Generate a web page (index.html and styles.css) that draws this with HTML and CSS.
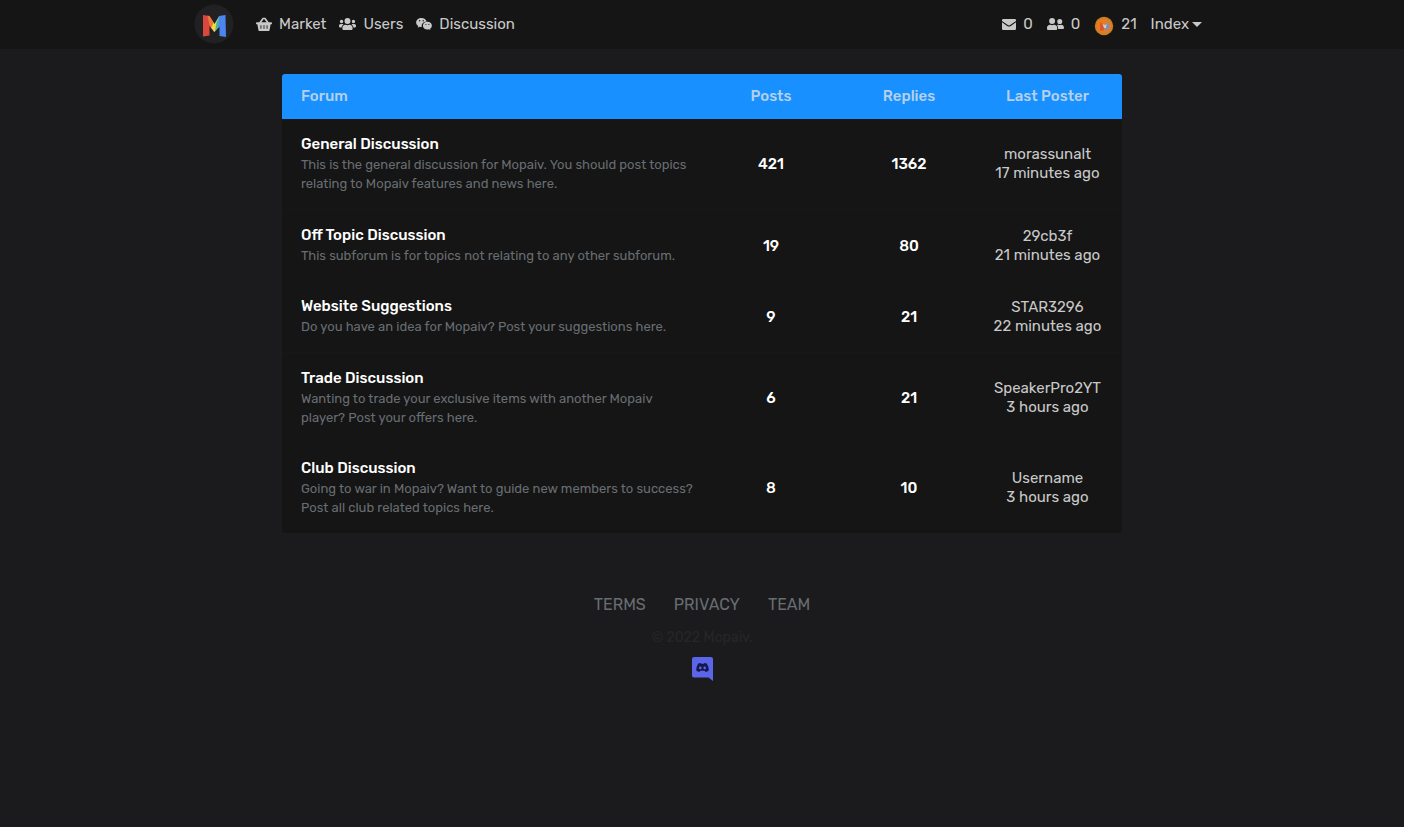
FILE: index.html
```
<!DOCTYPE html>
<html lang="en">
<head>
<meta charset="utf-8">
<meta name="viewport" content="width=device-width, initial-scale=1">
<title>Mopaiv</title>
<link rel="stylesheet" href="styles.css">
</head>
<body>
<header class="navbar">
  <nav class="nav-inner">
    <a class="logo" href="#" aria-label="Mopaiv">
      <svg viewBox="0 0 40 40" width="40" height="40">
        <circle cx="20" cy="20" r="19.500" fill="#212123"/>
        <path d="M9 11 L15.500 12 L21 21 L20 28 L15.500 22 V31.500 L9 32.500Z" fill="#dc473d"/>
        <path d="M31.500 11 L25 12 L20 21 V28 L25.500 22.500 V32 L32 33Z" fill="#4a86ee"/>
        <path d="M15.500 13 L20.500 20 L25 13 L23 23.500 L20.500 28 L17 23.500Z" fill="#f2d843"/>
        <path d="M22.500 18 L25 13 L24.500 23.500 L21 27.500Z" fill="#4bb3a4"/>
        <path d="M13.500 11.700 L15.500 12 L19.500 18.500 L17.500 23.500 L15.500 21Z" fill="#e8793c"/>
      </svg>
    </a>
    <a class="nav-link" href="#">
      <svg class="icon" viewBox="0 0 18 16" width="16" height="14" fill="currentColor"><path fill-rule="evenodd" d="M1 6h2.600L7.200 1a1 1 0 0 1 1.600 1.200L6 6h6L9.200 2.200A1 1 0 0 1 10.800 1l3.600 5H17a1 1 0 0 1 0 2.300h-.4L15.300 15q-.3 1-1.300 1H4q-1 0-1.300-1L1.400 8.300H1A1 1 0 0 1 1 6Zm4 3.500v4h1v-4Zm3.500 0v4h1v-4Zm3.500 0v4h1v-4Z"/></svg>
      Market
    </a>
    <a class="nav-link" href="#">
      <svg class="icon" viewBox="0 0 640 512" width="17" height="14" fill="currentColor"><path d="M96 224a64 64 0 1 0 0-128 64 64 0 0 0 0 128Zm448 0a64 64 0 1 0 0-128 64 64 0 0 0 0 128Zm32 32h-64c-18 0-34 7-45 19 40 22 69 62 75 109h66c18 0 32-14 32-32v-32c0-35-29-64-64-64Zm-256 0a112 112 0 1 0 0-224 112 112 0 0 0 0 224Zm77 32h-8c-42 20-95 20-138 0h-8c-64 0-115 52-115 115v29c0 27 21 48 48 48h288c27 0 48-21 48-48v-29c0-63-51-115-115-115Zm-224-13c-11-12-27-19-45-19H64c-35 0-64 29-64 64v32c0 18 14 32 32 32h66c6-47 35-87 75-109Z"/></svg>
      Users
    </a>
    <a class="nav-link" href="#">
      <svg class="icon" viewBox="0 0 576 512" width="16" height="14" fill="currentColor"><path fill-rule="evenodd" d="M385 167C369 92 290 37 196 37 88 37 0 110 0 202c0 53 29 97 78 130l-20 59 68-34c28 6 52 11 81 9-23-95 57-199 178-199ZM260 114a25 25 0 1 1 0 50 25 25 0 0 1 0-50Zm-130 50a25 25 0 1 1 0-50 25 25 0 0 1 0 50Zm446 154c0-77-77-140-163-140-92 0-165 63-165 140s73 140 165 140c19 0 38-5 58-10l53 29-15-48c39-30 67-68 67-111Zm-217-24a20 20 0 1 1 0-40 20 20 0 0 1 0 40Zm107 0a20 20 0 1 1 0-40 20 20 0 0 1 0 40Z"/></svg>
      Discussion
    </a>
    <div class="nav-right">
      <a class="nav-link" href="#" aria-label="Messages: 0">
        <svg class="icon" viewBox="0 0 14 11" width="14" height="11" fill="currentColor"><path d="M1.300 0h11.400Q14 0 14 1.300v.6L8.200 6Q7 6.800 5.800 6L0 1.900v-.6Q0 0 1.300 0ZM0 3.200l5.200 3.700q1.800 1.200 3.600 0L14 3.200v6.500Q14 11 12.700 11H1.300Q0 11 0 9.700Z"/></svg>
        0
      </a>
      <a class="nav-link" href="#" aria-label="Friends: 0">
        <svg class="icon" viewBox="0 0 640 512" width="17" height="14" fill="currentColor"><path d="M192 256a112 112 0 1 0 0-224 112 112 0 0 0 0 224Zm77 32h-8c-42 20-95 20-138 0h-8C52 288 0 340 0 403v29c0 27 21 48 48 48h288c27 0 48-21 48-48v-29c0-63-52-115-115-115Zm211-32a96 96 0 1 0 0-192 96 96 0 0 0 0 192Zm48 32h-4c-28 10-60 10-88 0h-4c-20 0-39 6-56 16 25 27 40 62 40 99v45h176c27 0 48-21 48-48 0-62-50-112-112-112Z"/></svg>
        0
      </a>
      <a class="nav-link coins" href="#" aria-label="Coins: 21">
        <svg class="icon coin" viewBox="0 0 20 20" width="20" height="20"><circle cx="10" cy="10" r="9.200" fill="#c98023"/><circle cx="10" cy="10" r="7.500" fill="#e87a20"/><path d="M6 6l4 3v5l-4 1Z" fill="#d9572c"/><path d="M11 8l4-2v7l-4 2Z" fill="#7c91bd"/><path d="M8.500 8l2.500 1 1.500-1-.5 4h-2Z" fill="#d6cbb9"/></svg>
        21
      </a>
      <button class="menu-button" type="button" aria-haspopup="true">Index<span class="caret"></span></button>
    </div>
  </nav>
</header>

<main class="content">
  <table class="forum">
    <colgroup><col class="col-forum"><col class="col-count"><col class="col-count"><col></colgroup>
    <thead>
      <tr><th>Forum</th><th>Posts</th><th>Replies</th><th>Last Poster</th></tr>
    </thead>
    <tbody>
      <tr>
        <td><a class="topic" href="#">General Discussion</a><p class="about">This is the general discussion for Mopaiv. You should post topics relating to Mopaiv features and news here.</p></td>
        <td>421</td><td>1362</td>
        <td><a class="poster" href="#">morassunalt</a><span class="when">17 minutes ago</span></td>
      </tr>
      <tr>
        <td><a class="topic" href="#">Off Topic Discussion</a><p class="about">This subforum is for topics not relating to any other subforum.</p></td>
        <td>19</td><td>80</td>
        <td><a class="poster" href="#">29cb3f</a><span class="when">21 minutes ago</span></td>
      </tr>
      <tr>
        <td><a class="topic" href="#">Website Suggestions</a><p class="about">Do you have an idea for Mopaiv? Post your suggestions here.</p></td>
        <td>9</td><td>21</td>
        <td><a class="poster" href="#">STAR3296</a><span class="when">22 minutes ago</span></td>
      </tr>
      <tr>
        <td><a class="topic" href="#">Trade Discussion</a><p class="about">Wanting to trade your exclusive items with another Mopaiv player? Post your offers here.</p></td>
        <td>6</td><td>21</td>
        <td><a class="poster" href="#">SpeakerPro2YT</a><span class="when">3 hours ago</span></td>
      </tr>
      <tr>
        <td><a class="topic" href="#">Club Discussion</a><p class="about">Going to war in Mopaiv? Want to guide new members to success? Post all club related topics here.</p></td>
        <td>8</td><td>10</td>
        <td><a class="poster" href="#">Username</a><span class="when">3 hours ago</span></td>
      </tr>
    </tbody>
  </table>
</main>

<footer class="footer">
  <nav class="footer-links">
    <a href="#">TERMS</a>
    <a href="#">PRIVACY</a>
    <a href="#">TEAM</a>
  </nav>
  <p class="copyright">© 2022 Mopaiv.</p>
  <a class="discord" href="#" aria-label="Discord">
    <svg viewBox="0 0 21 24" width="21" height="24"><path d="M2 0h17Q21 0 21 2V24l-4.500-3.500H2Q0 20.500 0 18.500V2Q0 0 2 0Z" fill="#5a65ea"/><path fill-rule="evenodd" d="M6.200 6.500 8.500 6l.6.800h2.800l.6-.8 2.300.5q2.200 3.500 2 7-1.600 1.400-3.300 1.500l-.8-1.200H8.300L7.500 15q-1.700-.1-3.300-1.500-.2-3.500 2-7ZM8.300 9.500a1.300 1.400 0 1 0 0 2.800 1.300 1.400 0 0 0 0-2.800Zm4.400 0a1.300 1.400 0 1 0 0 2.800 1.300 1.400 0 0 0 0-2.800Z" fill="#15184a"/></svg>
  </a>
</footer>
</body>
</html>
```
FILE: styles.css
```
* {
  box-sizing: border-box;
}

body {
  margin: 0;
  background: #1b1b1d;
  color: #c9c9c9;
  font-family: Rubik, Roboto, sans-serif;
  font-size: 15px;
  line-height: 20px;
}

a {
  color: inherit;
  text-decoration: none;
}

p {
  margin: 0;
}

svg {
  display: block;
}

.navbar {
  background: #151515;
}

.nav-inner {
  display: flex;
  align-items: center;
  gap: 13px;
  max-width: 1008px;
  height: 49px;
  margin: 0 auto;
  padding: 0 4px 1px 0;
}

.logo {
  flex: none;
  margin: 0 9px 0 -4px;
}

.nav-link {
  display: flex;
  align-items: center;
  gap: 7px;
}

.icon {
  flex: none;
}

.nav-right {
  display: flex;
  align-items: center;
  gap: 14px;
  margin-left: auto;
}

.coin {
  margin-top: 4px;
}

.menu-button {
  display: flex;
  align-items: center;
  gap: 3px;
  padding: 0;
  border: 0;
  background: none;
  color: inherit;
  font: inherit;
}

.caret {
  border: 5px solid transparent;
  border-top-color: currentColor;
  border-bottom: 0;
}

.content {
  max-width: 840px;
  margin: 25px auto 0;
}

.forum {
  width: 100%;
  table-layout: fixed;
  border-collapse: separate;
  border-spacing: 0;
  background: #151515;
  border-radius: 3px;
  overflow: hidden;
  text-align: center;
}

.col-forum {
  width: 50%;
}

.col-count {
  width: 138px;
}

.forum th {
  height: 45px;
  padding: 0 0 2px;
  background: #1890ff;
  color: #b4d0ec;
  font-weight: 500;
}

.forum td {
  padding: 0;
  color: #fff;
  font-weight: 500;
}

.forum tbody tr:nth-child(odd):not(:last-child) td {
  border-bottom: 1px solid #171717;
}

.forum tr > :first-child {
  padding-left: 19px;
  text-align: left;
}

.forum tr > :last-child {
  padding-right: 5px;
}

.forum td:first-child {
  padding: 14px 4px 16px 19px;
}

.forum td:last-child {
  color: #c9c9c9;
  font-weight: 400;
  line-height: 19px;
}

.topic {
  display: block;
  font-weight: 500;
  line-height: 22px;
}

.about {
  color: #686d72;
  font-size: 13px;
  font-weight: 400;
  line-height: 19px;
}

.poster,
.when {
  display: block;
}

.footer {
  display: flex;
  flex-direction: column;
  align-items: center;
  margin-top: 62px;
}

.footer-links {
  display: flex;
  gap: 28px;
  color: #686d72;
  font-size: 16px;
}

.copyright {
  margin: 13px 0 9px;
  color: #262628;
  font-size: 14px;
}
```
